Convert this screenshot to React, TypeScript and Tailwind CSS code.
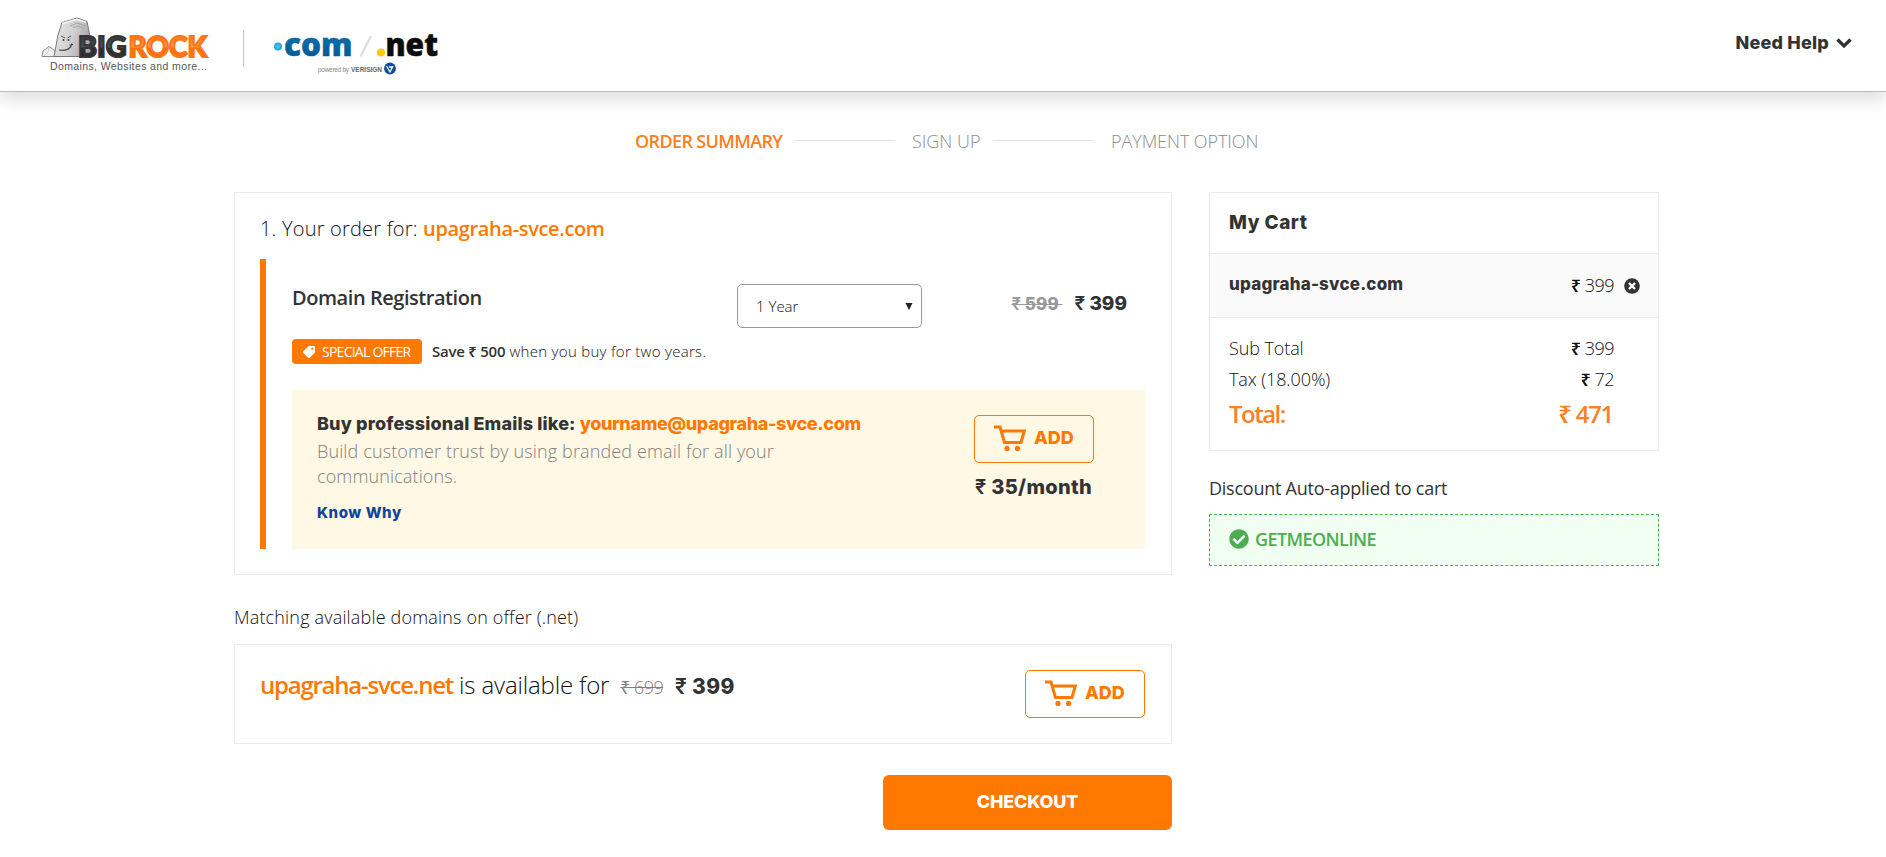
import React from "react";
import { FaCheckCircle, FaTag } from "react-icons/fa";

const heading = "font-['Inter','Noto_Sans',sans-serif] font-extrabold";

function BigRockLogo() {
  return (
    <svg width="176" height="66" viewBox="0 0 176 66" className="block" aria-label="BigRock">
      <defs>
        <linearGradient id="rock" x1="0" y1="0" x2="1" y2="0.3">
          <stop offset="0" stopColor="#e9e9e9" />
          <stop offset="0.6" stopColor="#cfcfcf" />
          <stop offset="1" stopColor="#a9a9a9" />
        </linearGradient>
        <linearGradient id="big" x1="0" y1="0" x2="0" y2="1">
          <stop offset="0.3" stopColor="#3c3c3c" />
          <stop offset="0.55" stopColor="#505050" />
          <stop offset="0.6" stopColor="#2d2d2d" />
        </linearGradient>
        <linearGradient id="orange" x1="0" y1="0" x2="0" y2="1">
          <stop offset="0.3" stopColor="#fb7c1c" />
          <stop offset="0.55" stopColor="#ff9a50" />
          <stop offset="0.6" stopColor="#ff6f08" />
        </linearGradient>
      </defs>
      <path d="M1 47.500 L2 42 L8 37.500 L13 41 L17 47.500 Z" fill="#efefef" stroke="#8c8c8c" strokeWidth="1" />
      <path d="M8 38 L7 43 L3 47" stroke="#c4c4c4" strokeWidth="0.8" fill="none" />
      <path d="M13 47.500 L17 26 L21 13.500 L36 9 L46 12.500 L48.500 25 L50 47.500 Z" fill="url(#rock)" stroke="#777" strokeWidth="1" />
      <path d="M21 14.500 L36 10.300 L45 13.300" fill="none" stroke="#fafafa" strokeWidth="1.4" />
      <path d="M29 17 L36 14 L44 17 M32 18.500 L38 17 L43 20" fill="none" stroke="#999" strokeWidth="0.8" />
      <path d="M20 27 L24 29 M30 27 L26.500 29" stroke="#555" strokeWidth="1" />
      <circle cx="22.5" cy="31" r="1" fill="#444" />
      <circle cx="27.5" cy="31" r="1" fill="#444" />
      <path d="M18 41 Q29 43 31 34.500 M28.500 36 L32 35.500" fill="none" stroke="#444" strokeWidth="1.1" />
      <text x="37" y="47.500" textLength="48.500" lengthAdjust="spacingAndGlyphs" fontFamily="Lato" fontWeight="900" fontSize="29" fill="url(#big)" stroke="#363636" strokeWidth="2">BIG</text>
      <text x="87.500" y="47.500" textLength="78.500" lengthAdjust="spacingAndGlyphs" fontFamily="Lato" fontWeight="900" fontSize="29" fill="url(#orange)" stroke="#ff7614" strokeWidth="2">ROCK</text>
      <text x="9" y="61" textLength="157" fontFamily="Liberation Sans" fontSize="10.500" fill="#555">Domains, Websites and more...</text>
    </svg>
  );
}

function RegistryLogo() {
  return (
    <svg width="170" height="62" viewBox="0 -12 170 62" className="block" aria-label=".com / .net">
      <defs>
        <radialGradient id="drop">
          <stop offset="0" stopColor="#5cc8f0" />
          <stop offset="1" stopColor="#1b9de2" />
        </radialGradient>
        <linearGradient id="com" x1="0" y1="0" x2="0" y2="1">
          <stop offset="0.4" stopColor="#0a6cab" />
          <stop offset="1" stopColor="#00518f" />
        </linearGradient>
      </defs>
      <circle cx="6" cy="20.500" r="4" fill="url(#drop)" />
      <text x="12" y="29.500" textLength="68.500" lengthAdjust="spacingAndGlyphs" fontFamily="Open Sans" fontWeight="800" fontSize="32" fill="url(#com)" stroke="#005f9f" strokeWidth="0.5">com</text>
      <path d="M88.500 30.500 L99 10" stroke="#dedede" strokeWidth="2.400" />
      <circle cx="109" cy="26.500" r="4" fill="#ffc800" />
      <text x="113.500" y="29.500" textLength="52.500" lengthAdjust="spacingAndGlyphs" fontFamily="Open Sans" fontWeight="800" fontSize="32" fill="#0c0c0c" stroke="#0c0c0c" strokeWidth="0.5">net</text>
      <text x="46" y="45.500" textLength="31" fontFamily="Liberation Sans" fontSize="6.500" fill="#888">powered by</text>
      <text x="79" y="45.500" textLength="31" lengthAdjust="spacingAndGlyphs" fontFamily="Liberation Sans" fontWeight="700" fontSize="6.500" fill="#666">VERISIGN</text>
      <circle cx="118" cy="42.500" r="5.900" fill="#0f4f94" />
      <path d="M114.500 40 L118 46 L121 40 M117 41 H120" stroke="#fff" strokeWidth="1.300" fill="none" />
    </svg>
  );
}

function CartIcon() {
  return (
    <svg width="32" height="26" viewBox="0 0 32 26" className="block">
      <path d="M0 2 H6 L10.500 17.500 H27 L30.300 6 H7.500" fill="none" stroke="#ff7800" strokeWidth="3" />
      <circle cx="13" cy="23.400" r="2.600" fill="#ff7800" />
      <circle cx="23.500" cy="23.400" r="2.600" fill="#ff7800" />
    </svg>
  );
}

function AddButton() {
  return (
    <button className="flex h-12 w-[120px] items-start rounded-[5px] border border-[#ff7800] pt-[9px] pl-[19px]">
      <CartIcon />
      <span className={`${heading} ml-2 text-[18px] leading-[25px] text-[#ff7800]`}>ADD</span>
    </button>
  );
}

function StepLine() {
  return <div className="mt-[7px] h-px w-[100px] bg-[#e0e0e0]" />;
}

function Header() {
  return (
    <header className="flex h-[92px] items-start justify-between border-b border-[#bcbcbc] bg-white shadow-[0_8px_16px_rgba(0,0,0,0.13)]">
      <div className="flex items-start">
        <div className="pt-[9px] pl-[41px]">
          <BigRockLogo />
        </div>
        <div className="mt-[30px] ml-[26px] h-[37px] w-px bg-[#c4c4c4]" />
        <div className="pt-[14px] pl-[28px]">
          <RegistryLogo />
        </div>
      </div>
      <div className="flex items-center gap-[7px] pt-[30px] pr-[34px]">
        <span className={`${heading} text-[18px] leading-[26px] tracking-[0.200px]`}>Need Help</span>
        <svg width="16" height="10" viewBox="0 0 16 10">
          <path d="M1.500 1.500 L8 8 L14.500 1.500" fill="none" stroke="#333" strokeWidth="3.200" />
        </svg>
      </div>
    </header>
  );
}

function Steps() {
  return (
    <div className="flex h-4 items-start pl-[401px] text-[18px] leading-[17px] text-[#8c8c8c]">
      <span className="w-[160px] font-semibold tracking-[-0.630px] whitespace-nowrap text-[#fb7f20]">ORDER SUMMARY</span>
      <StepLine />
      <span className="w-[98px] pl-[17px] font-light whitespace-nowrap">SIGN UP</span>
      <StepLine />
      <span className="pl-[18px] font-light tracking-[-0.070px] whitespace-nowrap">PAYMENT OPTION</span>
    </div>
  );
}

function OrderCard() {
  return (
    <section className="h-[383px] border border-[#ebebeb] px-[25px] pt-5">
      <h2 className="text-[20px] leading-[32px] font-light tracking-[0.200px] text-[#111]">
        1. Your order for: <span className="font-semibold tracking-[-0.350px] text-[#ff7800]">upagraha-svce.com</span>
      </h2>
      <div className="mt-[14px] h-[290px] border-l-6 border-[#ff7800] pr-px pl-[26px]">
        <div className="flex h-[80px] items-start pt-[25px]">
          <h3 className="w-[445px] text-[20px] leading-[28px] font-semibold tracking-[-0.450px]">Domain Registration</h3>
          <div className="flex h-11 w-[185px] items-center justify-between rounded-[5px] border border-[#999] pr-2 pl-[18px] text-[15px]">
            <span className="font-light text-[#111]">1 Year</span>
            <svg width="8" height="7" viewBox="0 0 8 7">
              <path d="M0.500 0 H7.500 L4 7 Z" fill="#222" />
            </svg>
          </div>
          <div className="ml-auto flex items-baseline gap-3 pt-[8px] pr-[18px] leading-6 whitespace-nowrap">
            <span className={`${heading} text-[17px] tracking-[0.100px] text-[#999] line-through decoration-1`}><span className="font-semibold">₹</span> 599&nbsp;</span>
            <span className={`${heading} text-[19px]`}><span className="font-semibold">₹</span> 399</span>
          </div>
        </div>
        <div className="flex h-[25px] items-center">
          <span className="flex h-[25px] w-[130px] items-center rounded-[4px] bg-[#ff7800] pl-[11px] text-[14px] tracking-[-0.750px] text-white">
            <FaTag size={12} className="mr-[7px] -scale-x-100" />
            SPECIAL OFFER
          </span>
          <span className="ml-[10px] text-[15px] font-light tracking-[0.300px] text-[#111]">
            <span className="font-semibold tracking-[-0.250px] text-[#333]">Save ₹ 500</span> when you buy for two years.
          </span>
        </div>
        <div className="mt-[26px] flex h-[159px] bg-[#fff8e5] pt-[20px] pl-[25px]">
          <div className="w-[657px]">
            <div className={`${heading} text-[18px] leading-[27px] tracking-[0.150px] whitespace-nowrap`}>
              Buy professional Emails like: <span className="tracking-[-0.350px] text-[#ff7800]">yourname@upagraha-svce.com</span>
            </div>
            <p className="mt-[2px] w-[480px] text-[18px] leading-[25px] font-light tracking-[0.130px] text-[#808080]">
              Build customer trust by using branded email for all your communications.
            </p>
            <div className={`${heading} mt-[12px] text-[15px] leading-6 tracking-[0.550px] text-[#114499]`}>Know Why</div>
          </div>
          <div className="pt-[5px]">
            <AddButton />
            <div className={`${heading} mt-[10px] pl-px text-[20px] leading-[28px] tracking-[0.330px] whitespace-nowrap`}><span className="font-semibold">₹</span> 35/month</div>
          </div>
        </div>
      </div>
    </section>
  );
}

function OfferCard() {
  return (
    <section className="mt-[12px] flex h-[100px] items-start justify-between border border-[#ebebeb] pt-[25px] pr-[26px] pl-[25px]">
      <div className="flex items-baseline leading-[30px] whitespace-nowrap">
        <span className="text-[24px] font-semibold tracking-[-1.230px] text-[#ff7800]">upagraha-svce.net</span>
        <span className="ml-[6px] text-[24px] font-light tracking-[-0.150px] text-[#111]">is available for</span>
        <span className="ml-[11px] text-[18px] font-light tracking-[-0.600px] text-[#808080] line-through decoration-1"><span className="font-normal">₹</span> 699</span>
        <span className={`${heading} ml-3 text-[21px] tracking-[0.300px]`}><span className="font-semibold">₹</span> 399</span>
      </div>
      <AddButton />
    </section>
  );
}

function CartPanel() {
  return (
    <aside className="w-[450px]">
      <div className="h-[259px] border border-[#ebebeb]">
        <div className={`${heading} h-[60px] pt-4 pl-[19px] text-[19px] leading-[27px] tracking-[0.500px]`}>My Cart</div>
        <div className="flex h-[65px] items-center border-y border-[#ebebeb] bg-[#fafafa] pr-[18px] pl-[19px]">
          <span className={`${heading} pb-px text-[17px] tracking-[0.200px]`}>upagraha-svce.com</span>
          <span className="ml-auto pb-px text-[18px] font-light tracking-[-0.500px] text-[#111]"><span className="font-semibold">₹</span> 399</span>
          <svg width="16" height="16" viewBox="0 0 16 16" className="ml-[10px]">
            <circle cx="8" cy="8" r="7.800" fill="#333" />
            <path d="M5 5 L11 11 M11 5 L5 11" stroke="#fff" strokeWidth="2.400" />
          </svg>
        </div>
        <div className="pt-[15px] pr-[44px] pl-[19px] text-[18px] leading-[31px] font-light text-[#111]">
          <div className="flex justify-between"><span className="tracking-[-0.100px]">Sub Total</span><span className="tracking-[-0.500px]"><span className="font-semibold">₹</span> 399</span></div>
          <div className="flex justify-between"><span className="tracking-[-0.100px]">Tax (18.00%)</span><span className="tracking-[-0.500px]"><span className="font-semibold">₹</span> 72</span></div>
          <div className="mt-[3px] flex justify-between pr-px text-[24px] leading-[32px] font-semibold tracking-[-1.500px] text-[#f98024]"><span>Total:</span><span className="tracking-[-1.300px]">₹ 471</span></div>
        </div>
      </div>
      <div className="mt-[24px] text-[18px] leading-[26px] font-normal tracking-[-0.250px]">Discount Auto-applied to cart</div>
      <div className="mt-[13px] flex h-[52px] items-center border border-dashed border-[#4cae51] bg-[#f1fff3] pb-[2px] pl-[19px] text-[18px] font-semibold tracking-[-0.600px] text-[#4cae51]">
        <FaCheckCircle size={20} className="mr-[6px]" />
        GETMEONLINE
      </div>
    </aside>
  );
}

export default function App() {
  return (
    <div className="h-[857px] w-full overflow-hidden bg-white font-['Open_Sans','Noto_Sans',sans-serif] text-[#333]">
      <Header />
      <main className="pt-[41px] pl-[234px]">
        <Steps />
        <div className="mt-[43px] flex gap-[37px]">
          <div className="w-[938px]">
            <OrderCard />
            <div className="mt-[28px] text-[18px] leading-[29px] font-light tracking-[0.170px] text-[#111]">Matching available domains on offer (.net)</div>
            <OfferCard />
            <div className="mt-[31px] flex justify-end">
              <button className={`${heading} h-[55px] w-[289px] rounded-[6px] bg-[#ff7800] pb-[2px] text-[18px] tracking-[-0.200px] text-white`}>CHECKOUT</button>
            </div>
          </div>
          <CartPanel />
        </div>
      </main>
    </div>
  );
}
